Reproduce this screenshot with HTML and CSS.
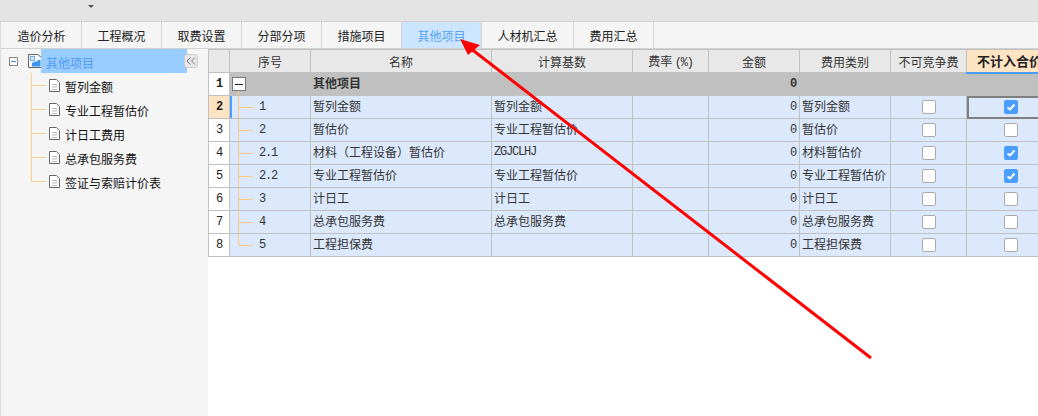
FILE: index.html
```html
<!DOCTYPE html>
<html lang="zh-CN">
<head>
<meta charset="utf-8">
<title>其他项目</title>
<link rel="stylesheet" href="styles.css">
</head>
<body>
<div class="page">
  <div class="topbar"><span class="caret"></span></div>
  <nav class="tabs">
    <a class="tab">造价分析</a>
    <a class="tab">工程概况</a>
    <a class="tab">取费设置</a>
    <a class="tab">分部分项</a>
    <a class="tab">措施项目</a>
    <a class="tab active">其他项目</a>
    <a class="tab wide">人材机汇总</a>
    <a class="tab">费用汇总</a>
  </nav>
  <main class="main">
    <aside class="side">
      <div class="root">
        <span class="expander"></span>
        <svg class="folder" width="14" height="14" viewBox="0 0 14 14"><path d="M.5.500h9l4 3v10H.5z" fill="#f4f8fd" stroke="#666"/><path d="M2.500 2.500h4v4h-4z" fill="#d5e7fb" stroke="#6fa8e8"/><path d="M4 12.500V9l2.500-1.500H9L10 6h2.500v6.500z" fill="#3f94ee"/></svg>
        <span class="root-label">其他项目</span>
      </div>
      <button class="collapse"><svg width="10" height="8" viewBox="0 0 10 8"><path d="M4.500.5 1 4l3.500 3.500M9 .5 5.500 4 9 7.500" fill="none" stroke="#777"/></svg></button>
      <ul class="tree">
        <li class="node"><svg class="doc" width="11" height="13" viewBox="0 0 11 13"><path d="M.5.5h7l3 3v9H.5z" fill="#fff" stroke="#666"/><path d="M3 5.500h5M3 8h5M3 10.500h5" stroke="#bbb"/></svg>暂列金额</li>
        <li class="node"><svg class="doc" width="11" height="13" viewBox="0 0 11 13"><path d="M.5.5h7l3 3v9H.5z" fill="#fff" stroke="#666"/><path d="M3 5.500h5M3 8h5M3 10.500h5" stroke="#bbb"/></svg>专业工程暂估价</li>
        <li class="node"><svg class="doc" width="11" height="13" viewBox="0 0 11 13"><path d="M.5.5h7l3 3v9H.5z" fill="#fff" stroke="#666"/><path d="M3 5.500h5M3 8h5M3 10.500h5" stroke="#bbb"/></svg>计日工费用</li>
        <li class="node"><svg class="doc" width="11" height="13" viewBox="0 0 11 13"><path d="M.5.5h7l3 3v9H.5z" fill="#fff" stroke="#666"/><path d="M3 5.500h5M3 8h5M3 10.500h5" stroke="#bbb"/></svg>总承包服务费</li>
        <li class="node last"><svg class="doc" width="11" height="13" viewBox="0 0 11 13"><path d="M.5.5h7l3 3v9H.5z" fill="#fff" stroke="#666"/><path d="M3 5.500h5M3 8h5M3 10.500h5" stroke="#bbb"/></svg>签证与索赔计价表</li>
      </ul>
    </aside>
    <section class="grid-wrap">
      <table class="grid">
        <colgroup>
          <col class="c-row"><col class="c-seq"><col class="c-name"><col class="c-base"><col class="c-rate"><col class="c-amt"><col class="c-kind"><col class="c-chk"><col class="c-last">
        </colgroup>
        <thead>
          <tr>
            <th></th><th>序号</th><th>名称</th><th>计算基数</th><th>费率 <span class="mono">(%)</span></th><th>金额</th><th>费用类别</th><th>不可竞争费</th><th class="th-sel">不计入合价</th>
          </tr>
        </thead>
        <tbody>
          <tr class="group">
            <td class="rh mono">1</td><td class="seq-root"><span class="expander big"></span></td><td>其他项目</td><td></td><td></td><td class="num mono">0</td><td></td><td></td><td></td>
          </tr>
          <tr>
            <td class="rh mono rh-sel">2</td><td class="seq mono cur">1</td><td>暂列金额</td><td>暂列金额</td><td></td><td class="num mono">0</td><td>暂列金额</td><td class="ck"><span class="box"></span></td><td class="ck cell-sel"><span class="box on"><svg width="14" height="14" viewBox="0 0 14 14"><path d="M3.500 7.500l2.500 2 4.500-5" fill="none" stroke="#fff" stroke-width="2"/></svg></span></td>
          </tr>
          <tr>
            <td class="rh mono">3</td><td class="seq mono">2</td><td>暂估价</td><td>专业工程暂估价</td><td></td><td class="num mono">0</td><td>暂估价</td><td class="ck"><span class="box"></span></td><td class="ck"><span class="box"></span></td>
          </tr>
          <tr>
            <td class="rh mono">4</td><td class="seq mono">2.1</td><td>材料（工程设备）暂估价</td><td class="mono">ZGJCLHJ</td><td></td><td class="num mono">0</td><td>材料暂估价</td><td class="ck"><span class="box"></span></td><td class="ck"><span class="box on"><svg width="14" height="14" viewBox="0 0 14 14"><path d="M3.500 7.500l2.500 2 4.500-5" fill="none" stroke="#fff" stroke-width="2"/></svg></span></td>
          </tr>
          <tr>
            <td class="rh mono">5</td><td class="seq mono">2.2</td><td>专业工程暂估价</td><td>专业工程暂估价</td><td></td><td class="num mono">0</td><td>专业工程暂估价</td><td class="ck"><span class="box"></span></td><td class="ck"><span class="box on"><svg width="14" height="14" viewBox="0 0 14 14"><path d="M3.500 7.500l2.500 2 4.500-5" fill="none" stroke="#fff" stroke-width="2"/></svg></span></td>
          </tr>
          <tr>
            <td class="rh mono">6</td><td class="seq mono">3</td><td>计日工</td><td>计日工</td><td></td><td class="num mono">0</td><td>计日工</td><td class="ck"><span class="box"></span></td><td class="ck"><span class="box"></span></td>
          </tr>
          <tr>
            <td class="rh mono">7</td><td class="seq mono">4</td><td>总承包服务费</td><td>总承包服务费</td><td></td><td class="num mono">0</td><td>总承包服务费</td><td class="ck"><span class="box"></span></td><td class="ck"><span class="box"></span></td>
          </tr>
          <tr>
            <td class="rh mono">8</td><td class="seq seq-last mono">5</td><td>工程担保费</td><td></td><td></td><td class="num mono">0</td><td>工程担保费</td><td class="ck"><span class="box"></span></td><td class="ck"><span class="box"></span></td>
          </tr>
        </tbody>
      </table>
    </section>
  </main>
  <svg class="arrow" width="1038" height="416" viewBox="0 0 1038 416"><path d="M871 358 470 48" stroke="#f00" stroke-width="3" fill="none"/><path d="M460 39 480 45 468 55z" fill="#f00"/></svg>
</div>
</body>
</html>
```
FILE: styles.css
```css
* { box-sizing: border-box; }
html, body { margin: 0; padding: 0; }
body {
  width: 1038px;
  height: 416px;
  overflow: hidden;
  background: #fff;
  color: #222;
  font-family: "Noto Sans CJK SC", "Liberation Sans", sans-serif;
  font-size: 12px;
}
.page { position: relative; display: flex; flex-direction: column; height: 416px; overflow: hidden; }

.topbar {
  height: 22px;
  flex: none;
  padding: 5px 0 0 88px;
  background: #e3e3e3;
  border-bottom: 1px solid #d2d2d2;
}
.caret {
  display: block;
  width: 0;
  height: 0;
  border-left: 3px solid transparent;
  border-right: 3px solid transparent;
  border-top: 3px solid #555;
}

.tabs {
  display: flex;
  flex: none;
  height: 27px;
  padding-left: 1px;
  background: #f5f5f5;
  border-bottom: 1px solid #d2d2d2;
  border-left: 1px solid #ddd;
}
.tab {
  flex: none;
  width: 80px;
  line-height: 27px;
  text-align: center;
  color: #222;
  border-right: 1px solid #d2d2d2;
}
.tab.wide { width: 92px; }
.tab.active { background: #cce6ff; color: #56a3f5; }

.main { display: flex; flex: 1; min-height: 0; }

.side {
  position: relative;
  flex: none;
  width: 208px;
  background: #f5f5f5;
  border-left: 1px solid #ddd;
}
.root { display: flex; align-items: center; height: 24px; padding-left: 8px; }
.expander {
  display: flex;
  align-items: center;
  justify-content: center;
  flex: none;
  width: 9px;
  height: 9px;
  background: #fff;
  border: 1px solid #888;
}
.expander::before { content: ""; width: 5px; height: 1px; background: #4a88c8; }
.folder { flex: none; margin-left: 10px; }
.root-label {
  display: block;
  flex: none;
  width: 146px;
  height: 24px;
  padding-left: 5px;
  margin-left: -1px;
  line-height: 28px;
  background: #99ccff;
  color: #4d9cf5;
}
.collapse {
  position: absolute;
  left: 183px;
  top: 5px;
  display: flex;
  align-items: center;
  justify-content: center;
  width: 14px;
  height: 14px;
  padding: 0;
  background: #e8e8e8;
  border: 1px solid #cfcfcf;
  border-radius: 3px;
}
.tree { list-style: none; margin: 0; padding: 0; }
.node {
  display: flex;
  align-items: center;
  height: 24px;
  padding: 2px 0 0 48px;
  color: #111;
  background:
    linear-gradient(#fc8, #fc8) 30px 0 / 1px 100% no-repeat,
    linear-gradient(#fc8, #fc8) 30px 12px / 14px 1px no-repeat;
}
.node.last {
  background:
    linear-gradient(#fc8, #fc8) 30px 0 / 1px 13px no-repeat,
    linear-gradient(#fc8, #fc8) 30px 12px / 14px 1px no-repeat;
}
.doc { flex: none; margin-right: 5px; margin-top: -2px; }

.grid-wrap { flex: 1; min-width: 0; overflow: hidden; background: #fff; }
.grid {
  border-collapse: collapse;
  table-layout: fixed;
  width: 847px;
  color: #333;
}
.c-row { width: 21px; }
.c-seq { width: 81px; }
.c-name { width: 181px; }
.c-base { width: 141px; }
.c-rate { width: 76px; }
.c-amt { width: 91px; }
.c-kind { width: 91px; }
.c-chk { width: 76px; }
.c-last { width: 89px; }

.grid th, .grid td {
  height: 23px;
  padding: 0 2px 3px;
  border: 1px solid #c0c0c0;
  white-space: nowrap;
  overflow: hidden;
}
.grid th {
  background: #e8e8e8;
  font-weight: 400;
  text-align: center;
  padding-bottom: 0;
}
.grid th.th-sel {
  background: #ffe4c4;
  color: #222;
  font-weight: 700;
  font-size: 13px;
  border-bottom: 2px solid #4a9eff;
  padding: 0 3px 0 0;
}
.grid td { background-color: #dce9fd; }
.grid .group td { background-color: #c0c0c0; font-weight: 700; }
.grid td.rh { background-color: #fff; text-align: center; padding: 0; color: #222; }
.grid .group td.rh, .grid td.rh-sel { font-weight: 700; }
.grid td.rh-sel { background-color: #ffe4c4; }
.mono { font-family: "Liberation Mono", "DejaVu Sans Mono", monospace; font-size: 12px; letter-spacing: -1.2px; }
.grid td.num { text-align: right; padding: 0 3px 1px 2px; }
.grid td.seq {
  padding: 0 2px 1px 29px;
  background-image: linear-gradient(#fdc77f, #fdc77f), linear-gradient(#fdc77f, #fdc77f);
  background-size: 1px 100%, 15px 1px;
  background-position: 8px 0, 8px 11px;
  background-repeat: no-repeat;
}
.grid td.seq-last { background-size: 1px 12px, 15px 1px; }
.grid td.cur { box-shadow: inset 2px 0 0 #4a9eff; }
.grid td.seq-root {
  padding: 0 0 0 2px;
  background-image: linear-gradient(#fdc77f, #fdc77f);
  background-size: 1px 5px;
  background-position: 8px 100%;
  background-repeat: no-repeat;
}
.expander.big { width: 14px; height: 14px; border-color: #777; }
.expander.big::before { width: 8px; background: #222; }
.grid td.ck { text-align: center; padding: 0; }
.box {
  display: block;
  width: 14px;
  height: 14px;
  margin: 0 auto;
  background: #fff;
  border: 1px solid #aaa;
  border-radius: 2px;
}
.box.on { background: #4a9eff; border: 0; }
.box svg { display: block; }
.grid td.cell-sel { outline: 2px solid #808080; outline-offset: -2px; }

.arrow { position: absolute; left: 0; top: 0; pointer-events: none; }
```
